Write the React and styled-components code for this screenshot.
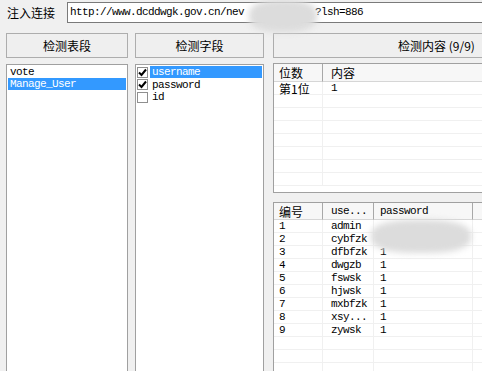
import React from 'react'
import styled, { createGlobalStyle } from 'styled-components'

const GlobalStyle = createGlobalStyle`
  html, body {
    margin: 0;
    padding: 0;
    background: #f0f0f0;
    overflow: hidden;
  }
`

const mono = `"Liberation Mono", "Courier New", monospace`
const cjk = `"Noto Sans CJK SC", "Noto Sans", sans-serif`

const tables = ['vote', 'Manage_User']
const fields = [
  { name: 'username', checked: true },
  { name: 'password', checked: true },
  { name: 'id', checked: false },
]
const users = [
  ['1', 'admin', ''],
  ['2', 'cybfzk', ''],
  ['3', 'dfbfzk', '1'],
  ['4', 'dwgzb', '1'],
  ['5', 'fswsk', '1'],
  ['6', 'hjwsk', '1'],
  ['7', 'mxbfzk', '1'],
  ['8', 'xsy...', '1'],
  ['9', 'zywsk', '1'],
]

function App() {
  return (
    <Window>
      <GlobalStyle />
      <TopRow>
        <Label>注入连接</Label>
        <UrlInput>http://www.dcddwgk.gov.cn/nev<Gap />?lsh=886</UrlInput>
        <Smudge $left={243} $top={-2} $w={68} $h={32} />
      </TopRow>

      <Columns>
        <Column>
          <Button>检测表段</Button>
          <ListBox>
            {tables.map((t, i) => (
              <Item key={t} $selected={i === 1}>{t}</Item>
            ))}
          </ListBox>
        </Column>

        <Column>
          <Button>检测字段</Button>
          <ListBox>
            {fields.map((f, i) => (
              <CheckRow key={f.name}>
                <Box>
                  {f.checked && (
                    <svg width="9" height="9" viewBox="0 0 9 9">
                      <path d="M1 4.5 L3.5 7 L8 1.5" fill="none" stroke="#000" strokeWidth="2" />
                    </svg>
                  )}
                </Box>
                <Item $selected={i === 0}>{f.name}</Item>
              </CheckRow>
            ))}
          </ListBox>
        </Column>

        <RightColumn>
          <Button>检测内容 (9/9)</Button>
          <Grid $cols="49px 1fr" $height={130} $head={18}>
            <Head $first>位数</Head>
            <Head>内容</Head>
            <Cell $first $cjk>第1位</Cell>
            <Cell>1</Cell>
            {Array.from({ length: 7 }).map((_, i) => (
              <React.Fragment key={i}>
                <Cell $first />
                <Cell />
              </React.Fragment>
            ))}
          </Grid>
          <Grid $cols="49px 51px 99px 1fr" $height={200} $head={17}>
            <Head $first>编号</Head>
            <Head $mono>use...</Head>
            <Head $mono $pad={6}>password</Head>
            <Head />
            {users.map(u => (
              <React.Fragment key={u[0]}>
                <Cell $first>{u[0]}</Cell>
                <Cell>{u[1]}</Cell>
                <Cell $pad={6}>{u[2]}</Cell>
                <Cell />
              </React.Fragment>
            ))}
            {Array.from({ length: 4 }).map((_, i) => (
              <React.Fragment key={'e' + i}>
                <Cell $first />
                <Cell />
                <Cell />
                <Cell />
              </React.Fragment>
            ))}
            <Smudge $left={97} $top={17} $w={100} $h={33} />
          </Grid>
        </RightColumn>
      </Columns>
    </Window>
  )
}

const Window = styled.div`
  width: 602px;
  height: 390px;
  padding: 2px 0 0 6px;
  box-sizing: border-box;
`

const TopRow = styled.div`
  position: relative;
  display: flex;
  align-items: center;
  height: 21px;
`

const Label = styled.span`
  font: 12px ${cjk};
  color: #000;
  margin-left: 1px;
  width: 60px;
  line-height: 12px;
`

const UrlInput = styled.div`
  flex: 1;
  height: 19px;
  border: 1px solid #7a7a7a;
  background: #fff;
  font: 11px ${mono};
  letter-spacing: -0.6px;
  line-height: 19px;
  padding-left: 2px;
  white-space: nowrap;
  overflow: hidden;
`

const Gap = styled.span`
  display: inline-block;
  width: 71px;
`

const Smudge = styled.div`
  position: absolute;
  left: ${p => p.$left}px;
  top: ${p => p.$top}px;
  width: ${p => p.$w}px;
  height: ${p => p.$h}px;
  background: #dcdcdc;
  border-radius: 40%;
  filter: blur(3px);
  pointer-events: none;
`

const Columns = styled.div`
  display: grid;
  grid-template-columns: 122px 129px 329px;
  column-gap: 7px;
  margin-top: 10px;
`

const Column = styled.div`
  display: flex;
  flex-direction: column;
  gap: 6px;
`

const RightColumn = styled.div`
  display: flex;
  flex-direction: column;
  gap: 5px;
  margin-left: 2px;
  & > *:nth-child(3) {
    margin-top: 4px;
  }
`

const Button = styled.div`
  height: 25px;
  box-sizing: border-box;
  border: 1px solid #adadad;
  background: #efefef;
  display: flex;
  align-items: center;
  justify-content: center;
  font: 12px ${cjk};
  color: #000;
  white-space: pre;
`

const ListBox = styled.div`
  height: 320px;
  box-sizing: border-box;
  border: 1px solid #a0a0a0;
  background: #fff;
  padding: 1px 1px 0 1px;
`

const Item = styled.div`
  flex: 1;
  height: 12px;
  line-height: 12px;
  padding-left: 2px;
  font: 11px ${mono};
  letter-spacing: -0.6px;
  background: ${p => (p.$selected ? '#3399ff' : 'transparent')};
  color: ${p => (p.$selected ? '#fff' : '#000')};
  white-space: nowrap;
`

const CheckRow = styled.div`
  display: flex;
  align-items: center;
  gap: 2px;
  height: 12px;
  margin-bottom: 0.5px;
`

const Box = styled.div`
  width: 11px;
  height: 11px;
  box-sizing: border-box;
  border: 1px solid #8f8f8f;
  background: #fff;
  display: flex;
  align-items: center;
  justify-content: center;
`

const Grid = styled.div`
  position: relative;
  height: ${p => p.$height}px;
  box-sizing: border-box;
  border: 1px solid #a0a0a0;
  border-right: none;
  background: #fff;
  display: grid;
  grid-template-columns: ${p => p.$cols};
  grid-template-rows: ${p => p.$head}px;
  grid-auto-rows: 13px;
  overflow: hidden;
  align-content: start;
`

const Head = styled.div`
  background: #f7f7f7;
  border-right: 1px solid #a8a8a8;
  border-bottom: 1px solid #d6d6d6;
  padding-left: ${p => (p.$first ? 5 : p.$pad ?? 8)}px;
  font: ${p => (p.$mono ? `11px ${mono}` : `12px ${cjk}`)};
  letter-spacing: ${p => (p.$mono ? '-0.6px' : '0')};
  display: flex;
  align-items: center;
  white-space: nowrap;
`

const Cell = styled.div`
  border-right: 1px solid #f0f0f0;
  border-bottom: 1px solid #f0f0f0;
  padding-left: ${p => (p.$first ? 5 : p.$pad ?? 8)}px;
  font: ${p => (p.$cjk ? `12px ${cjk}` : `11px ${mono}`)};
  letter-spacing: ${p => (p.$cjk ? '0' : '-0.6px')};
  display: flex;
  align-items: center;
  white-space: nowrap;
`

export default App
